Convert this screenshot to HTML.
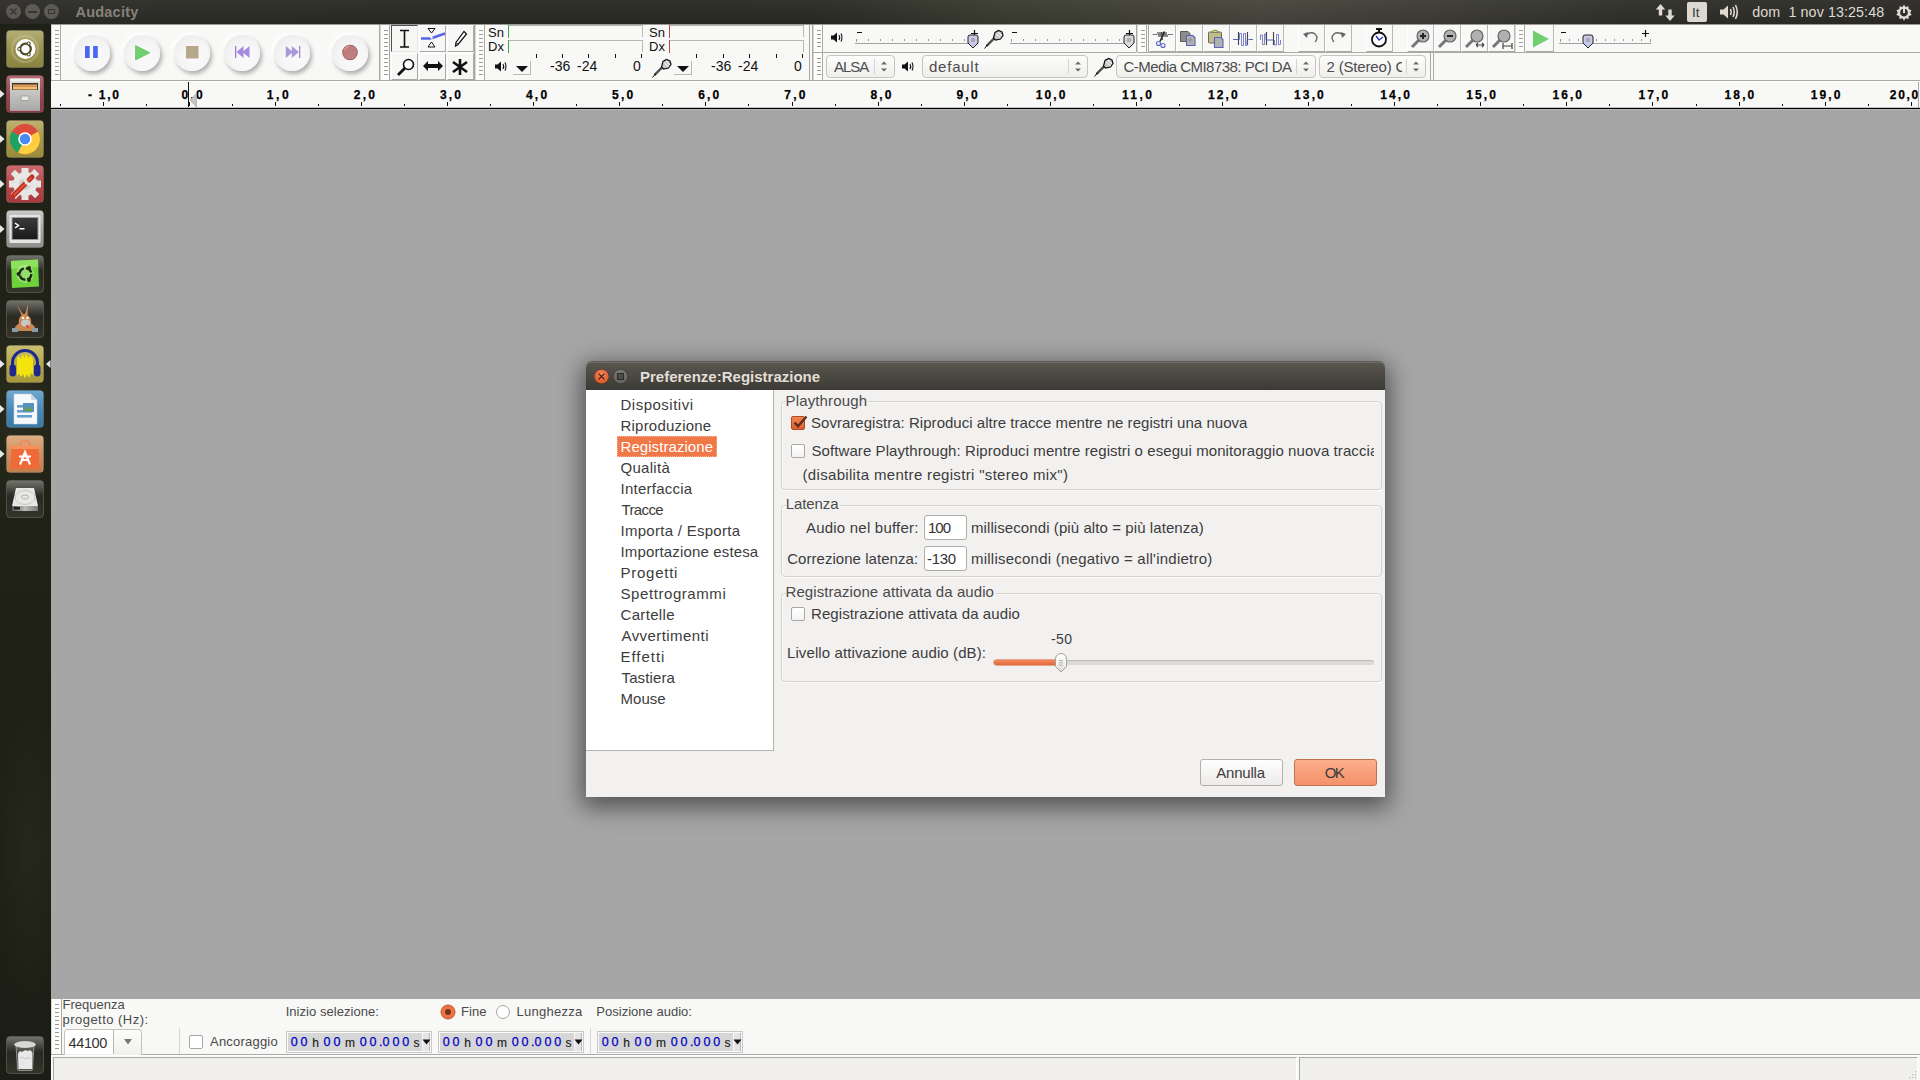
<!DOCTYPE html>
<html><head><meta charset="utf-8">
<style>
*{box-sizing:border-box;margin:0;padding:0}
html,body{width:1920px;height:1080px;overflow:hidden}
body{position:relative;background:#a6a6a6;font-family:"Liberation Sans",sans-serif;color:#3c3c3c}
.a{position:absolute}
.t{position:absolute;white-space:nowrap;line-height:1}
/* top panel */
#panel{left:0;top:0;width:1920px;height:24px;background:linear-gradient(rgba(255,255,255,.035),rgba(0,0,0,.07)),linear-gradient(to right,#2e2d29 0,#292a23 500px,#2a2b23 820px,#3a3b30 1000px,#414137 1150px,#46463d 1260px,#3c3c34 1440px,#2f2f29 1640px,#2c2b27 1920px)}
/* launcher */
#launcher{left:0;top:24px;width:51px;height:1056px;background:radial-gradient(ellipse 40px 120px at 20px 380px,rgba(70,75,50,.25),transparent),radial-gradient(ellipse 40px 160px at 30px 830px,rgba(70,75,50,.2),transparent),linear-gradient(#1f2017,#212318 40%,#1e2016 65%,#1c1d14)}
/* app */
#tb{left:51px;top:24px;width:1869px;height:57px;background:#f8f8f6}
#ruler{left:51px;top:81px;width:1869px;height:28px;background:#f8f8f6;border-top:1px solid #b8b8b6;border-bottom:1px solid #1a1a1a}
#selbar{left:51px;top:999px;width:1869px;height:56px;background:#f8f8f6;border-bottom:1px solid #b0b0ae}
#status{left:51px;top:1055px;width:1869px;height:25px;background:#f8f8f6}
/* dialog */
#dlg{left:586px;top:362px;width:799px;height:435px;background:#f2f1f0;border-radius:5px 5px 0 0;box-shadow:0 6px 24px 4px rgba(0,0,0,.52)}
#dtitle{left:0;top:0;width:799px;height:28px;background:linear-gradient(#5a574f,#3c3a35);border-radius:5px 5px 0 0;box-shadow:inset 0 1px 0 rgba(255,255,240,.13),0 -.5px 0 #3a3934}
#dlist{left:0;top:28px;width:188px;height:360px;background:#fff;border-right:1px solid #b5b3ae;border-bottom:1px solid #b5b3ae}
.li{position:absolute;left:35px;font-size:15px;color:#3c3c3c;white-space:nowrap;line-height:1}
.grp{position:absolute;border:1px solid #d6d4d0;border-radius:4px}
.glab{position:absolute;font-size:15px;color:#4a4a4a;background:#f2f1f0;padding:0 1px;line-height:1;white-space:nowrap}
.cb{position:absolute;width:14px;height:14px;border:1px solid #a8a7a3;border-radius:2px;background:linear-gradient(#fff,#f4f4f4)}
.lbl{position:absolute;font-size:15px;color:#3c3c3c;white-space:nowrap;line-height:1}
.fld{position:absolute;background:#fff;border:1px solid #aeada9;border-radius:3px;font-size:15px;color:#333;line-height:1}
</style></head><body>
<div id="panel" class="a">
  <div class="a" style="left:6px;top:4px;width:15px;height:15px;border-radius:50%;background:#5b5a55"></div>
  <svg class="a" style="left:9px;top:7px" width="9" height="9"><path d="M1.5 1.5L7.5 7.5M7.5 1.5L1.5 7.5" stroke="#36352f" stroke-width="1.4"/></svg>
  <div class="a" style="left:25px;top:4px;width:15px;height:15px;border-radius:50%;background:#5b5a55"></div>
  <div class="a" style="left:28px;top:11px;width:9px;height:2px;background:#36352f"></div>
  <div class="a" style="left:44px;top:4px;width:15px;height:15px;border-radius:50%;background:#5b5a55"></div>
  <div class="a" style="left:48px;top:9px;width:7px;height:5px;border:1.3px solid #36352f"></div>
  <div class="t" style="left:75.50px;top:5px;font-size:14.5px;font-weight:bold;color:#858279;letter-spacing:0.214px;">Audacity</div>
  <svg class="a" style="left:1655px;top:3px" width="22" height="19"><path d="M5.5 1L0.8 6.5H3.8V12.5H7.2V6.5H10.2Z M15 18L19.7 12.5H16.7V6.5H13.3V12.5H10.3Z" fill="#dfdbd2"/></svg>
  <div class="a" style="left:1687px;top:2px;width:20px;height:20px;border-radius:2px;background:#dcd8d2"></div>
  <div class="t" style="left:1692px;top:6px;font-size:13.5px;color:#3a3935">It</div>
  <svg class="a" style="left:1719px;top:3px" width="22" height="18"><path d="M1 6.5H4.5L9 2.5V15.5L4.5 11.5H1Z" fill="#dfdbd2"/><path d="M11.5 6Q13 9 11.5 12M14 4Q16.5 9 14 14M16.5 2Q20 9 16.5 16" fill="none" stroke="#dfdbd2" stroke-width="1.6"/></svg>
  <div class="t" style="left:1752.30px;top:5px;font-size:14.3px;color:#dfdbd2;letter-spacing:0.083px;">dom&nbsp; 1 nov 13:25:48</div>
  <svg class="a" style="left:1895px;top:3px" width="18" height="18"><path d="M9 1.5L10.5 4L13.4 3.2L13.8 6.2L16.6 7.2L15.2 9.6L16.6 12L13.8 13L13.4 16L10.5 15.2L9 17.7L7.5 15.2L4.6 16L4.2 13L1.4 12L2.8 9.6L1.4 7.2L4.2 6.2L4.6 3.2L7.5 4Z" fill="#dfdbd2"/><circle cx="9" cy="9.6" r="3.8" fill="#302f2b"/><path d="M9 4V10" stroke="#dfdbd2" stroke-width="2"/></svg>
</div>
<!--LAUNCH-->
<svg width="0" height="0" style="position:absolute"><defs>
<linearGradient id="gOl" x1="0" y1="0" x2="0" y2="1"><stop offset="0" stop-color="#a8a260"/><stop offset="1" stop-color="#8a8440"/></linearGradient>
<linearGradient id="gRd" x1="0" y1="0" x2="0" y2="1"><stop offset="0" stop-color="#a8565c"/><stop offset="1" stop-color="#8a3a42"/></linearGradient>
<linearGradient id="gYl" x1="0" y1="0" x2="0" y2="1"><stop offset="0" stop-color="#b5a65c"/><stop offset="1" stop-color="#9a8a3c"/></linearGradient>
<linearGradient id="gRd2" x1="0" y1="0" x2="0" y2="1"><stop offset="0" stop-color="#c4565a"/><stop offset="1" stop-color="#a83a3e"/></linearGradient>
<linearGradient id="gGy" x1="0" y1="0" x2="0" y2="1"><stop offset="0" stop-color="#c0c0be"/><stop offset="1" stop-color="#8e8e8c"/></linearGradient>
<linearGradient id="gDk" x1="0" y1="0" x2="0" y2="1"><stop offset="0" stop-color="#4a4a42"/><stop offset=".45" stop-color="#2a2a22"/><stop offset="1" stop-color="#34342a"/></linearGradient>
<linearGradient id="gGl" x1="0" y1="0" x2="0" y2="1"><stop offset="0" stop-color="rgba(255,255,255,.22)"/><stop offset="1" stop-color="rgba(255,255,255,0)"/></linearGradient>
<linearGradient id="gGl2" x1="0" y1="0" x2="0" y2="1"><stop offset="0" stop-color="rgba(255,255,255,.12)"/><stop offset="1" stop-color="rgba(255,255,255,0)"/></linearGradient>
<linearGradient id="gAu" x1="0" y1="0" x2="0" y2="1"><stop offset="0" stop-color="#c2b65c"/><stop offset="1" stop-color="#a8983c"/></linearGradient>
<linearGradient id="gBl" x1="0" y1="0" x2="0" y2="1"><stop offset="0" stop-color="#5c9cca"/><stop offset="1" stop-color="#3a78a6"/></linearGradient>
<linearGradient id="gOr" x1="0" y1="0" x2="0" y2="1"><stop offset="0" stop-color="#daa272"/><stop offset="1" stop-color="#c07e4e"/></linearGradient>
<linearGradient id="gDr" x1="0" y1="0" x2="0" y2="1"><stop offset="0" stop-color="#c8c8c6"/><stop offset="1" stop-color="#a8a8a6"/></linearGradient>
<linearGradient id="gTm" x1="0" y1="0" x2="0" y2="1"><stop offset="0" stop-color="#3a3a3a"/><stop offset="1" stop-color="#1a1a1a"/></linearGradient>
<linearGradient id="gHd" x1="0" y1="0" x2="1" y2="0"><stop offset="0" stop-color="#555"/><stop offset=".5" stop-color="#bbb"/><stop offset="1" stop-color="#777"/></linearGradient>
<radialGradient id="gCl" cx=".5" cy=".35" r=".7"><stop offset="0" stop-color="#f58a5c"/><stop offset="1" stop-color="#d9501f"/></radialGradient><radialGradient id="gMx" cx=".5" cy=".35" r=".7"><stop offset="0" stop-color="#85837d"/><stop offset="1" stop-color="#5e5c57"/></radialGradient>
</defs></svg>
<div id="launcher" class="a">
<svg class="a" style="left:6px;top:6px" width="38" height="38" viewBox="0 0 38 38"><rect x="0.5" y="0.5" width="37" height="37" rx="3.5" fill="url(#gOl)" stroke="rgba(255,255,255,0.12)"/><rect x="1" y="1" width="36" height="18" rx="3" fill="url(#gGl2)"/><circle cx="19" cy="19" r="13" fill="none" stroke="rgba(255,255,255,.18)" stroke-width="2.5"/><circle cx="19.5" cy="19" r="10" fill="#fff"/><circle cx="19.5" cy="19" r="5.3" fill="none" stroke="#4f4a22" stroke-width="2.2"/><circle cx="13.2" cy="19" r="2" fill="#4f4a22"/><circle cx="22.7" cy="13.5" r="2" fill="#4f4a22"/><circle cx="22.7" cy="24.5" r="2" fill="#4f4a22"/><circle cx="13.2" cy="19" r="1" fill="#fff"/><circle cx="22.7" cy="13.5" r="1" fill="#fff"/><circle cx="22.7" cy="24.5" r="1" fill="#fff"/></svg>
<svg class="a" style="left:6px;top:51px" width="38" height="38" viewBox="0 0 38 38"><rect x="0.5" y="0.5" width="37" height="37" rx="3.5" fill="url(#gRd)" stroke="rgba(255,255,255,0.12)"/><rect x="1" y="1" width="36" height="18" rx="3" fill="url(#gGl2)"/><rect x="4" y="3.5" width="30" height="32" rx="1.5" fill="#d8d8d6"/><rect x="4" y="3.5" width="30" height="3" fill="#efefed"/><rect x="6" y="8" width="26" height="7" fill="#3a3a38"/><rect x="7" y="9.5" width="24" height="2" fill="#f09a50"/><rect x="7" y="11.5" width="24" height="3" fill="#f4c070"/><rect x="4" y="15" width="30" height="20.5" fill="url(#gDr)"/><rect x="15" y="21" width="8" height="4.5" rx="1" fill="#e8e8e6" stroke="#8a8a88" stroke-width=".7"/></svg>
<svg class="a" style="left:6px;top:96px" width="38" height="38" viewBox="0 0 38 38"><rect x="0.5" y="0.5" width="37" height="37" rx="3.5" fill="url(#gYl)" stroke="rgba(255,255,255,0.12)"/><rect x="1" y="1" width="36" height="18" rx="3" fill="url(#gGl2)"/><circle cx="19" cy="19" r="15" fill="#dd4b3e"/><path d="M19 19L6 11.5A15 15 0 0 0 12 32.5Z" fill="#1da462"/><path d="M19 19L12 32.5A15 15 0 0 0 34 19Z" fill="#ffcd40"/><path d="M19 19L34 19A15 15 0 0 0 32 11.5Z" fill="#ffcd40"/><circle cx="19" cy="19" r="6.8" fill="#fff"/><circle cx="19" cy="19" r="5.2" fill="#4a89f3"/></svg>
<svg class="a" style="left:6px;top:141px" width="38" height="38" viewBox="0 0 38 38"><rect x="0.5" y="0.5" width="37" height="37" rx="3.5" fill="url(#gRd2)" stroke="rgba(255,255,255,0.12)"/><rect x="1" y="1" width="36" height="18" rx="3" fill="url(#gGl2)"/><g fill="#e6e6e4"><circle cx="19" cy="19" r="12"/><rect x="15.5" y="3" width="7" height="6"/><rect x="15.5" y="29" width="7" height="6"/><rect x="3" y="15.5" width="6" height="7"/><rect x="29" y="15.5" width="6" height="7"/><rect x="6" y="6" width="7" height="6" transform="rotate(45 9 9)"/><rect x="25" y="6" width="7" height="6" transform="rotate(45 29 9)"/><rect x="6" y="26" width="7" height="6" transform="rotate(45 9 29)"/><rect x="25" y="26" width="7" height="6" transform="rotate(45 29 29)"/></g><circle cx="19" cy="19" r="6" fill="#cfcfcd"/><path d="M7.5 30.5L26 12" stroke="#c03020" stroke-width="5" stroke-linecap="round"/><path d="M8 30L25.5 12.5" stroke="#e05a48" stroke-width="1.5"/><path d="M23.5 8.5A5.5 5.5 0 1 0 30 14.5" fill="none" stroke="#e6e6e4" stroke-width="3.2"/></svg>
<svg class="a" style="left:6px;top:186px" width="38" height="38" viewBox="0 0 38 38"><rect x="0.5" y="0.5" width="37" height="37" rx="3.5" fill="url(#gGy)" stroke="rgba(255,255,255,0.12)"/><rect x="1" y="1" width="36" height="18" rx="3" fill="url(#gGl2)"/><rect x="3.5" y="5" width="31" height="28" rx="1" fill="#e4e4e2"/><rect x="5.5" y="7" width="27" height="23" fill="#9a9a98"/><rect x="6.5" y="8" width="25" height="21" fill="url(#gTm)"/><path d="M9 13L12.5 15.5L9 18" stroke="#fff" stroke-width="1.5" fill="none"/><rect x="13.5" y="18" width="5" height="1.5" fill="#fff"/></svg>
<svg class="a" style="left:6px;top:231px" width="38" height="38" viewBox="0 0 38 38"><rect x="0.5" y="0.5" width="37" height="37" rx="3.5" fill="url(#gDk)" stroke="rgba(255,255,255,0.18)"/><rect x="1" y="1" width="36" height="14" rx="3" fill="url(#gGl)"/><path d="M5 6L32 4.5L33 31.5L6 33Z" fill="#6ed23c"/><path d="M5 6L32 4.5L32.3 12L5.4 14Z" fill="#8ee060"/><circle cx="19" cy="19" r="9" fill="rgba(255,255,255,.25)"/><circle cx="19.5" cy="19" r="5.8" fill="none" stroke="#1e2a10" stroke-width="2.4" stroke-dasharray="7 2"/><circle cx="12.5" cy="19" r="2" fill="#1e2a10"/><circle cx="23" cy="13" r="2" fill="#1e2a10"/><circle cx="23" cy="25" r="2" fill="#1e2a10"/></svg>
<svg class="a" style="left:6px;top:276px" width="38" height="38" viewBox="0 0 38 38"><rect x="0.5" y="0.5" width="37" height="37" rx="3.5" fill="url(#gDk)" stroke="rgba(255,255,255,0.18)"/><rect x="1" y="1" width="36" height="14" rx="3" fill="url(#gGl)"/><path d="M11 5L17 14L19 14L22 4L21.5 15Q26 18 25 23L29 27L28 31H10L9 27L13 23Q12 18 15.5 15Z" fill="#c88850"/><ellipse cx="19.5" cy="23" rx="4.5" ry="3.5" fill="#c8c8c8"/><circle cx="17" cy="18" r="1.3" fill="#fff"/><circle cx="21.5" cy="18" r="1.3" fill="#fff"/><rect x="6" y="28" width="6" height="4" fill="#8a98a8"/><rect x="26" y="28" width="6" height="4" fill="#8a98a8"/><path d="M21 25L22 28" stroke="#e03a50" stroke-width="2"/></svg>
<svg class="a" style="left:6px;top:321px" width="38" height="38" viewBox="0 0 38 38"><rect x="0.5" y="0.5" width="37" height="37" rx="3.5" fill="url(#gAu)" stroke="rgba(255,255,255,0.12)"/><rect x="1" y="1" width="36" height="18" rx="3" fill="url(#gGl2)"/><path d="M6.5 24V18A12.5 12.5 0 0 1 31.5 18V24" fill="none" stroke="#1c2890" stroke-width="3"/><rect x="3.5" y="19.5" width="6.5" height="12" rx="3.2" fill="#1c2890"/><rect x="28" y="19.5" width="6.5" height="12" rx="3.2" fill="#1c2890"/><path d="M11 13L13 11L14.5 14L16.5 9L18.5 13L20.5 8.5L22.5 13L24.5 10L27 14V30L25 28L23 33L21 29L19 33.5L17 29L15 32L13 28.5L11 31Z" fill="#f2e40c"/></svg>
<svg class="a" style="left:6px;top:366px" width="38" height="38" viewBox="0 0 38 38"><rect x="0.5" y="0.5" width="37" height="37" rx="3.5" fill="url(#gBl)" stroke="rgba(255,255,255,0.12)"/><rect x="1" y="1" width="36" height="18" rx="3" fill="url(#gGl2)"/><path d="M8 4H25L31 10V34H8Z" fill="#f6f8fa" stroke="#c8d4e0" stroke-width=".6"/><path d="M25 4V10H31Z" fill="#c8d8e8"/><rect x="11" y="15" width="15" height="2.6" fill="#6aa0d0"/><rect x="11" y="20" width="15" height="2.6" fill="#6aa0d0"/><rect x="11" y="25" width="15" height="2.6" fill="#6aa0d0"/><rect x="17" y="13" width="11" height="9" fill="#5890c0"/><path d="M18 21L22 16L27 21Z" fill="#6a9e4a"/></svg>
<svg class="a" style="left:6px;top:411px" width="38" height="38" viewBox="0 0 38 38"><rect x="0.5" y="0.5" width="37" height="37" rx="3.5" fill="url(#gOr)" stroke="rgba(255,255,255,0.12)"/><rect x="1" y="1" width="36" height="18" rx="3" fill="url(#gGl2)"/><path d="M14 12Q14 5.5 19 5.5Q24 5.5 24 12" fill="none" stroke="#f08a58" stroke-width="2"/><path d="M5.5 11H32.5L33.5 34H4.5Z" fill="#f06a38"/><path d="M5.5 11H32.5L32.6 14H5.4Z" fill="#f8905c"/><path d="M14 29.5L19 17L24 29.5M15.5 25H22.5M13 21.5H25" stroke="#fff" stroke-width="2.1" fill="none"/></svg>
<svg class="a" style="left:6px;top:456px" width="38" height="38" viewBox="0 0 38 38"><rect x="0.5" y="0.5" width="37" height="37" rx="3.5" fill="url(#gDk)" stroke="rgba(255,255,255,0.18)"/><rect x="1" y="1" width="36" height="14" rx="3" fill="url(#gGl)"/><path d="M10 8H28L32 26H6Z" fill="#e8e8e6"/><ellipse cx="19" cy="17.5" rx="10" ry="7" fill="none" stroke="#c4c4c2" stroke-width="1"/><ellipse cx="19" cy="17" rx="3.5" ry="2" fill="none" stroke="#b0b0ae" stroke-width="1"/><rect x="6" y="26" width="26" height="5" fill="url(#gHd)"/><rect x="8" y="27" width="6" height="2.5" fill="#222"/></svg>
<svg class="a" style="left:6px;top:1012px" width="38" height="38" viewBox="0 0 38 38"><rect x="0.5" y="0.5" width="37" height="37" rx="3.5" fill="url(#gDk)" stroke="rgba(255,255,255,0.18)"/><rect x="1" y="1" width="36" height="14" rx="3" fill="url(#gGl)"/><path d="M10 9H28L26.5 33Q26.5 34.5 25 34.5H13Q11.5 34.5 11.5 33Z" fill="rgba(200,200,200,.22)" stroke="rgba(230,230,230,.6)" stroke-width=".8"/><ellipse cx="19" cy="8.5" rx="10.5" ry="3" fill="#d8d8d6" stroke="#f0f0f0" stroke-width=".6"/><path d="M12 18Q13 14 16 16Q19 13 22 15Q25 13 26.5 17L26 33H12.5Z" fill="#e8e8e8"/><path d="M14 22Q17 20 19 23Q22 20 25 23" stroke="#bcbcbc" stroke-width=".8" fill="none"/></svg>
<svg class="a" style="left:0;top:66px" width="5" height="8"><path d="M0 0L4.5 4L0 8Z" fill="#e8e8e8"/></svg>
<svg class="a" style="left:0;top:111px" width="5" height="8"><path d="M0 0L4.5 4L0 8Z" fill="#e8e8e8"/></svg>
<svg class="a" style="left:0;top:156px" width="5" height="8"><path d="M0 0L4.5 4L0 8Z" fill="#e8e8e8"/></svg>
<svg class="a" style="left:0;top:201px" width="5" height="8"><path d="M0 0L4.5 4L0 8Z" fill="#e8e8e8"/></svg>
<svg class="a" style="left:0;top:336px" width="5" height="8"><path d="M0 0L4.5 4L0 8Z" fill="#e8e8e8"/></svg>
<svg class="a" style="left:0;top:381px" width="5" height="8"><path d="M0 0L4.5 4L0 8Z" fill="#e8e8e8"/></svg>
<svg class="a" style="left:0;top:426px" width="5" height="8"><path d="M0 0L4.5 4L0 8Z" fill="#e8e8e8"/></svg>
<svg class="a" style="left:46px;top:336px" width="5" height="8"><path d="M4.5 0L0 4L4.5 8Z" fill="#e8e8e8"/></svg>
</div>
<!--/LAUNCH-->
<div id="tb" class="a"></div>
<div id="ruler" class="a"></div>
<!--TB-->
<div class="a" style="left:51px;top:24px;width:1869px;height:1px;background:#9a9a98"></div>
<div class="a" style="left:51px;top:80px;width:1869px;height:1px;background:#a9a9a7"></div>
<div class="a" style="left:51px;top:81px;width:1869px;height:1px;background:#ffffff"></div>
<div class="a" style="left:51px;top:25px;width:10px;height:55px;background:#fdfdfc;border-right:1px solid #a9a9a7;border-left:1px solid #d8d8d6"></div>
<svg class="a" style="left:55px;top:25px" width="4" height="55"><g fill="#9a9a98"><rect x="0" y="5" width="4" height="1"/><rect x="0" y="9" width="4" height="1"/><rect x="0" y="13" width="4" height="1"/><rect x="0" y="17" width="4" height="1"/><rect x="0" y="21" width="4" height="1"/><rect x="0" y="25" width="4" height="1"/><rect x="0" y="29" width="4" height="1"/><rect x="0" y="33" width="4" height="1"/><rect x="0" y="37" width="4" height="1"/><rect x="0" y="41" width="4" height="1"/><rect x="0" y="45" width="4" height="1"/><rect x="0" y="49" width="4" height="1"/></g></svg>
<div class="a" style="left:379px;top:25px;width:1px;height:55px;background:#a9a9a7"></div>
<div class="a" style="left:74px;top:34.5px;width:36px;height:36px;border-radius:50%;background:radial-gradient(circle at 60% 64%,#fafafa 0,#f6f6f6 42%,#ededed 78%,#eeeeee 100%);box-shadow:2px 3px 4px rgba(0,0,0,.3),-2px -2px 5px #fff"></div>
<div class="a" style="left:124px;top:34.5px;width:36px;height:36px;border-radius:50%;background:radial-gradient(circle at 60% 64%,#fafafa 0,#f6f6f6 42%,#ededed 78%,#eeeeee 100%);box-shadow:2px 3px 4px rgba(0,0,0,.3),-2px -2px 5px #fff"></div>
<div class="a" style="left:174px;top:34.5px;width:36px;height:36px;border-radius:50%;background:radial-gradient(circle at 60% 64%,#fafafa 0,#f6f6f6 42%,#ededed 78%,#eeeeee 100%);box-shadow:2px 3px 4px rgba(0,0,0,.3),-2px -2px 5px #fff"></div>
<div class="a" style="left:224px;top:34.5px;width:36px;height:36px;border-radius:50%;background:radial-gradient(circle at 60% 64%,#fafafa 0,#f6f6f6 42%,#ededed 78%,#eeeeee 100%);box-shadow:2px 3px 4px rgba(0,0,0,.3),-2px -2px 5px #fff"></div>
<div class="a" style="left:274px;top:34.5px;width:36px;height:36px;border-radius:50%;background:radial-gradient(circle at 60% 64%,#fafafa 0,#f6f6f6 42%,#ededed 78%,#eeeeee 100%);box-shadow:2px 3px 4px rgba(0,0,0,.3),-2px -2px 5px #fff"></div>
<div class="a" style="left:332px;top:34.5px;width:36px;height:36px;border-radius:50%;background:radial-gradient(circle at 60% 64%,#fafafa 0,#f6f6f6 42%,#ededed 78%,#eeeeee 100%);box-shadow:2px 3px 4px rgba(0,0,0,.3),-2px -2px 5px #fff"></div>
<svg class="a" style="left:84px;top:45px" width="16" height="15"><rect x="1" y="1" width="4.7" height="12" rx=".6" fill="#4a68ee"/><rect x="9.1" y="1" width="4.7" height="12" rx=".6" fill="#4a68ee"/></svg>
<svg class="a" style="left:134px;top:44px" width="18" height="18"><path d="M1.5 1.5L16 8.8L1.5 16Z" fill="#70d070" stroke="#5cb85c" stroke-width=".6"/></svg>
<svg class="a" style="left:185px;top:45px" width="15" height="15"><rect x="1" y="1" width="12.5" height="12.5" fill="#b8a88a"/></svg>
<svg class="a" style="left:234px;top:45px" width="18" height="15"><rect x="1" y="1" width="1.3" height="12" fill="#9c7cd8"/><path d="M2.5 7L9.5 1V13Z M8.5 7L15.5 1V13Z" fill="#a58ae0"/></svg>
<svg class="a" style="left:284px;top:45px" width="18" height="15"><rect x="15" y="1" width="1.3" height="12" fill="#9c8cd0"/><path d="M14.8 7L7.8 1V13Z M8.8 7L1.8 1V13Z" fill="#a898d8"/></svg>
<svg class="a" style="left:341px;top:44px" width="18" height="18"><circle cx="9" cy="8.5" r="7.8" fill="#9a5c5c"/><circle cx="9" cy="8.5" r="7" fill="#bf7e7e"/><path d="M3.5 6A6 6 0 0 1 8 2" stroke="#e09a9a" stroke-width="1.2" fill="none"/></svg>
<div class="a" style="left:380px;top:25px;width:10px;height:55px;background:#fdfdfc;border-right:1px solid #a9a9a7;border-left:1px solid #d8d8d6"></div>
<svg class="a" style="left:384px;top:25px" width="4" height="55"><g fill="#9a9a98"><rect x="0" y="5" width="4" height="1"/><rect x="0" y="9" width="4" height="1"/><rect x="0" y="13" width="4" height="1"/><rect x="0" y="17" width="4" height="1"/><rect x="0" y="21" width="4" height="1"/><rect x="0" y="25" width="4" height="1"/><rect x="0" y="29" width="4" height="1"/><rect x="0" y="33" width="4" height="1"/><rect x="0" y="37" width="4" height="1"/><rect x="0" y="41" width="4" height="1"/><rect x="0" y="45" width="4" height="1"/><rect x="0" y="49" width="4" height="1"/></g></svg>
<div class="a" style="left:474px;top:25px;width:1px;height:55px;background:#a9a9a7"></div>
<div class="a" style="left:391px;top:25px;width:27px;height:27px;background:#f6f6f4;border-left:1px solid #505050;border-top:1px solid #505050;border-right:1px solid #e8e8e6;border-bottom:1px solid #e8e8e6"></div>
<div class="a" style="left:419px;top:25px;width:27px;height:27px;background:#f6f6f4;border-right:1px solid #a9a9a7;border-bottom:1px solid #a9a9a7;border-left:1px solid #fff;border-top:1px solid #fff"></div>
<div class="a" style="left:447px;top:25px;width:27px;height:27px;background:#f6f6f4;border-right:1px solid #a9a9a7;border-bottom:1px solid #a9a9a7;border-left:1px solid #fff;border-top:1px solid #fff"></div>
<div class="a" style="left:391px;top:53px;width:27px;height:27px;background:#f6f6f4;border-right:1px solid #a9a9a7;border-bottom:1px solid #a9a9a7;border-left:1px solid #fff;border-top:1px solid #fff"></div>
<div class="a" style="left:419px;top:53px;width:27px;height:27px;background:#f6f6f4;border-right:1px solid #a9a9a7;border-bottom:1px solid #a9a9a7;border-left:1px solid #fff;border-top:1px solid #fff"></div>
<div class="a" style="left:447px;top:53px;width:27px;height:27px;background:#f6f6f4;border-right:1px solid #a9a9a7;border-bottom:1px solid #a9a9a7;border-left:1px solid #fff;border-top:1px solid #fff"></div>
<svg class="a" style="left:398px;top:29px" width="14" height="20"><path d="M2 1.5H11M2 18H11M6.5 1.5V18" stroke="#111" stroke-width="1.6"/></svg>
<svg class="a" style="left:420px;top:27px" width="26" height="22"><path d="M8 1.5H15L11.5 6Z M8 20H15L11.5 15Z" fill="#fff" stroke="#111" stroke-width="1"/><path d="M1 11.5H10L15 10L25 6.5" stroke="#5a64e8" stroke-width="2.4" fill="none"/><circle cx="11.5" cy="10.5" r="1.2" fill="#fff"/></svg>
<svg class="a" style="left:454px;top:30px" width="14" height="18"><path d="M10 1.5L12.5 4L4 14.5L1.5 16L2 12.5Z" fill="#fff" stroke="#111" stroke-width="1.2"/><path d="M2 12.5L4 14.5" stroke="#111"/></svg>
<svg class="a" style="left:396px;top:57px" width="20" height="20"><circle cx="12.5" cy="7.5" r="5" fill="#fff" stroke="#111" stroke-width="1.6"/><path d="M9 11L2 18" stroke="#111" stroke-width="2.8"/></svg>
<svg class="a" style="left:422px;top:59px" width="22" height="14"><path d="M1 7L6 2V5H16V2L21 7L16 12V9H6V12Z" fill="#111"/></svg>
<svg class="a" style="left:451px;top:58px" width="18" height="18"><path d="M9 1V17M2 4L16 14M16 4L2 14" stroke="#111" stroke-width="2.6"/></svg>
<div class="a" style="left:475px;top:25px;width:10px;height:55px;background:#fdfdfc;border-right:1px solid #a9a9a7;border-left:1px solid #d8d8d6"></div>
<svg class="a" style="left:479px;top:25px" width="4" height="55"><g fill="#9a9a98"><rect x="0" y="5" width="4" height="1"/><rect x="0" y="9" width="4" height="1"/><rect x="0" y="13" width="4" height="1"/><rect x="0" y="17" width="4" height="1"/><rect x="0" y="21" width="4" height="1"/><rect x="0" y="25" width="4" height="1"/><rect x="0" y="29" width="4" height="1"/><rect x="0" y="33" width="4" height="1"/><rect x="0" y="37" width="4" height="1"/><rect x="0" y="41" width="4" height="1"/><rect x="0" y="45" width="4" height="1"/><rect x="0" y="49" width="4" height="1"/></g></svg>
<div class="a" style="left:809px;top:25px;width:1px;height:55px;background:#a9a9a7"></div>
<div class="a" style="left:812px;top:25px;width:1px;height:55px;background:#a9a9a7"></div>
<div class="t" style="left:488px;top:26px;font-size:13px;color:#111">Sn</div>
<div class="t" style="left:488px;top:40px;font-size:13px;color:#111">Dx</div>
<div class="a" style="left:508px;top:25px;width:135px;height:12px;background:#f8f8f6;border-top:1px solid #b8b8b6;border-right:1px solid #b8b8b6"></div>
<div class="a" style="left:508px;top:25px;width:1px;height:13px;background:#3aa845"></div>
<div class="a" style="left:508px;top:40px;width:135px;height:12px;background:#f8f8f6;border-top:1px solid #b8b8b6;border-right:1px solid #b8b8b6"></div>
<div class="a" style="left:508px;top:40px;width:1px;height:13px;background:#3aa845"></div>
<div class="a" style="left:536px;top:54px;width:1px;height:4px;background:#111"></div>
<div class="a" style="left:562px;top:54px;width:1px;height:4px;background:#111"></div>
<div class="a" style="left:588px;top:54px;width:1px;height:4px;background:#111"></div>
<div class="a" style="left:615px;top:54px;width:1px;height:4px;background:#111"></div>
<div class="a" style="left:641px;top:54px;width:1px;height:4px;background:#111"></div>
<div class="t" style="left:649px;top:26px;font-size:13px;color:#111">Sn</div>
<div class="t" style="left:649px;top:40px;font-size:13px;color:#111">Dx</div>
<div class="a" style="left:669px;top:25px;width:135px;height:12px;background:#f8f8f6;border-top:1px solid #b8b8b6;border-right:1px solid #b8b8b6"></div>
<div class="a" style="left:669px;top:25px;width:1px;height:13px;background:#c04848"></div>
<div class="a" style="left:669px;top:40px;width:135px;height:12px;background:#f8f8f6;border-top:1px solid #b8b8b6;border-right:1px solid #b8b8b6"></div>
<div class="a" style="left:669px;top:40px;width:1px;height:13px;background:#c04848"></div>
<div class="a" style="left:696px;top:54px;width:1px;height:4px;background:#111"></div>
<div class="a" style="left:723px;top:54px;width:1px;height:4px;background:#111"></div>
<div class="a" style="left:749px;top:54px;width:1px;height:4px;background:#111"></div>
<div class="a" style="left:776px;top:54px;width:1px;height:4px;background:#111"></div>
<div class="a" style="left:802px;top:54px;width:1px;height:4px;background:#111"></div>
<svg class="a" style="left:494px;top:60px" width="14" height="13"><path d="M1 4.5H3.5L7 1.5V11.5L3.5 8.5H1Z" fill="#111"/><path d="M9 4Q10.5 6.5 9 9M11 2.5Q13 6.5 11 10.5" stroke="#111" stroke-width="1.1" fill="none"/></svg>
<div class="a" style="left:513px;top:61px;width:18px;height:14px;border-right:1px solid #b8b8b6;border-bottom:1px solid #b8b8b6"></div>
<svg class="a" style="left:515px;top:65px" width="14" height="8"><path d="M1 1H13L7 7Z" fill="#111"/></svg>
<div class="t" style="left:550px;top:59px;font-size:14px;color:#111">-36</div>
<div class="t" style="left:577px;top:59px;font-size:14px;color:#111">-24</div>
<div class="t" style="left:633px;top:59px;font-size:14px;color:#111">0</div>
<svg class="a" style="left:651px;top:58px" width="22" height="20"><path d="M1.5 19.5L4 16.5" stroke="#111" stroke-width="1"/><path d="M3.5 17L11 9.5" stroke="#111" stroke-width="2.2"/><path d="M4.5 16L10.5 10" stroke="#ddd" stroke-width=".6"/><path d="M10.5 9L12 3.5L15.5 1.5L19 3L20 6.5L17.5 10L12.5 11Z" fill="#c8c8c8" stroke="#111" stroke-width="1.2"/><path d="M13 4.5L17.5 9M15 3L19 7" stroke="#fff" stroke-width="1"/></svg>
<div class="a" style="left:674px;top:61px;width:18px;height:14px;border-right:1px solid #b8b8b6;border-bottom:1px solid #b8b8b6"></div>
<svg class="a" style="left:676px;top:65px" width="14" height="8"><path d="M1 1H13L7 7Z" fill="#111"/></svg>
<div class="t" style="left:711px;top:59px;font-size:14px;color:#111">-36</div>
<div class="t" style="left:738px;top:59px;font-size:14px;color:#111">-24</div>
<div class="t" style="left:794px;top:59px;font-size:14px;color:#111">0</div>
<div class="a" style="left:813px;top:25px;width:10px;height:27px;background:#fdfdfc;border-right:1px solid #a9a9a7;border-left:1px solid #d8d8d6"></div>
<svg class="a" style="left:817px;top:25px" width="4" height="27"><g fill="#9a9a98"><rect x="0" y="5" width="4" height="1"/><rect x="0" y="9" width="4" height="1"/><rect x="0" y="13" width="4" height="1"/><rect x="0" y="17" width="4" height="1"/><rect x="0" y="21" width="4" height="1"/></g></svg>
<div class="a" style="left:813px;top:52px;width:323px;height:1px;background:#a9a9a7"></div>
<div class="a" style="left:1136px;top:25px;width:1px;height:27px;background:#a9a9a7"></div>
<svg class="a" style="left:830px;top:31px" width="14" height="13"><path d="M1 4.5H3.5L7 1.5V11.5L3.5 8.5H1Z" fill="#111"/><path d="M9 4Q10.5 6.5 9 9M11 2.5Q13 6.5 11 10.5" stroke="#111" stroke-width="1.1" fill="none"/></svg>
<div class="a" style="left:855px;top:43px;width:120px;height:1px;background:#a0a0a0"></div>
<div class="a" style="left:857px;top:32px;width:5px;height:1px;background:#111"></div>
<svg class="a" style="left:970px;top:29px" width="9" height="9"><path d="M4.5 1V8M1 4.5H8" stroke="#111" stroke-width="1.2"/></svg>
<svg class="a" style="left:856px;top:39px" width="125" height="4"><g fill="#999"><rect x="0" y="0" width="1" height="3"/><rect x="12" y="0" width="1" height="2"/><rect x="24" y="0" width="1" height="2"/><rect x="36" y="0" width="1" height="2"/><rect x="48" y="0" width="1" height="2"/><rect x="60" y="0" width="1" height="2"/><rect x="72" y="0" width="1" height="2"/><rect x="84" y="0" width="1" height="2"/><rect x="96" y="0" width="1" height="2"/><rect x="108" y="0" width="1" height="2"/><rect x="120" y="0" width="1" height="2"/></g></svg>
<svg class="a" style="left:967px;top:34px" width="12" height="15"><path d="M1 3Q1 1 3 1H9Q11 1 11 3V9L6 14L1 9Z" fill="#c8c8e8" stroke="#222" stroke-width="1"/><path d="M4 5H8M4 7H8" stroke="#777" stroke-width=".8"/></svg>
<div class="a" style="left:1010px;top:43px;width:120px;height:1px;background:#a0a0a0"></div>
<div class="a" style="left:1012px;top:32px;width:5px;height:1px;background:#111"></div>
<svg class="a" style="left:1125px;top:29px" width="9" height="9"><path d="M4.5 1V8M1 4.5H8" stroke="#111" stroke-width="1.2"/></svg>
<svg class="a" style="left:1011px;top:39px" width="125" height="4"><g fill="#999"><rect x="0" y="0" width="1" height="3"/><rect x="12" y="0" width="1" height="2"/><rect x="24" y="0" width="1" height="2"/><rect x="36" y="0" width="1" height="2"/><rect x="48" y="0" width="1" height="2"/><rect x="60" y="0" width="1" height="2"/><rect x="72" y="0" width="1" height="2"/><rect x="84" y="0" width="1" height="2"/><rect x="96" y="0" width="1" height="2"/><rect x="108" y="0" width="1" height="2"/><rect x="120" y="0" width="1" height="2"/></g></svg>
<svg class="a" style="left:1123px;top:34px" width="12" height="15"><path d="M1 3Q1 1 3 1H9Q11 1 11 3V9L6 14L1 9Z" fill="#d8d8d8" stroke="#222" stroke-width="1"/><path d="M4 5H8M4 7H8" stroke="#777" stroke-width=".8"/></svg>
<svg class="a" style="left:983px;top:29px" width="22" height="20"><path d="M1.5 19.5L4 16.5" stroke="#111" stroke-width="1"/><path d="M3.5 17L11 9.5" stroke="#111" stroke-width="2.2"/><path d="M4.5 16L10.5 10" stroke="#ddd" stroke-width=".6"/><path d="M10.5 9L12 3.5L15.5 1.5L19 3L20 6.5L17.5 10L12.5 11Z" fill="#c8c8c8" stroke="#111" stroke-width="1.2"/><path d="M13 4.5L17.5 9M15 3L19 7" stroke="#fff" stroke-width="1"/></svg>
<div class="a" style="left:1137px;top:25px;width:10px;height:27px;background:#fdfdfc;border-right:1px solid #a9a9a7;border-left:1px solid #d8d8d6"></div>
<svg class="a" style="left:1141px;top:25px" width="4" height="27"><g fill="#9a9a98"><rect x="0" y="5" width="4" height="1"/><rect x="0" y="9" width="4" height="1"/><rect x="0" y="13" width="4" height="1"/><rect x="0" y="17" width="4" height="1"/><rect x="0" y="21" width="4" height="1"/></g></svg>
<div class="a" style="left:1148px;top:25px;width:1px;height:27px;background:#a9a9a7"></div>
<div class="a" style="left:1149px;top:25px;width:27px;height:27px;border-right:1px solid #b8b8b6;border-bottom:1px solid #a9a9a7;border-left:1px solid #fff"></div>
<div class="a" style="left:1176px;top:25px;width:27px;height:27px;border-right:1px solid #b8b8b6;border-bottom:1px solid #a9a9a7;border-left:1px solid #fff"></div>
<div class="a" style="left:1203px;top:25px;width:27px;height:27px;border-right:1px solid #b8b8b6;border-bottom:1px solid #a9a9a7;border-left:1px solid #fff"></div>
<div class="a" style="left:1230px;top:25px;width:27px;height:27px;border-right:1px solid #b8b8b6;border-bottom:1px solid #a9a9a7;border-left:1px solid #fff"></div>
<div class="a" style="left:1257px;top:25px;width:27px;height:27px;border-right:1px solid #b8b8b6;border-bottom:1px solid #a9a9a7;border-left:1px solid #fff"></div>
<div class="a" style="left:1298px;top:25px;width:27px;height:27px;border-right:1px solid #b8b8b6;border-bottom:1px solid #a9a9a7;border-left:1px solid #fff"></div>
<div class="a" style="left:1325px;top:25px;width:27px;height:27px;border-right:1px solid #b8b8b6;border-bottom:1px solid #a9a9a7;border-left:1px solid #fff"></div>
<div class="a" style="left:1366px;top:25px;width:27px;height:27px;border-right:1px solid #b8b8b6;border-bottom:1px solid #a9a9a7;border-left:1px solid #fff"></div>
<div class="a" style="left:1407px;top:25px;width:27px;height:27px;border-right:1px solid #b8b8b6;border-bottom:1px solid #a9a9a7;border-left:1px solid #fff"></div>
<div class="a" style="left:1434px;top:25px;width:27px;height:27px;border-right:1px solid #b8b8b6;border-bottom:1px solid #a9a9a7;border-left:1px solid #fff"></div>
<div class="a" style="left:1461px;top:25px;width:27px;height:27px;border-right:1px solid #b8b8b6;border-bottom:1px solid #a9a9a7;border-left:1px solid #fff"></div>
<div class="a" style="left:1488px;top:25px;width:27px;height:27px;border-right:1px solid #b8b8b6;border-bottom:1px solid #a9a9a7;border-left:1px solid #fff"></div>
<div class="a" style="left:1137px;top:52px;width:380px;height:1px;background:#a9a9a7"></div>
<svg class="a" style="left:1149px;top:25px" width="27" height="27"><path d="M3.5 9.5H8L9 7L10 12L11 7L12 12L13 7L14 12L15 7L16 12L17 7L18 12L19 9.5H24" stroke="#555" stroke-width=".8" fill="none"/><path d="M15.5 6.5L11 16.5" stroke="#222" stroke-width="1.6"/><path d="M12.5 7L13.5 15" stroke="#444" stroke-width="1"/><circle cx="9.5" cy="18.5" r="2" fill="none" stroke="#5a64c0" stroke-width="1.1"/><circle cx="14" cy="20.5" r="2" fill="none" stroke="#5a64c0" stroke-width="1.1"/></svg>
<svg class="a" style="left:1176px;top:25px" width="27" height="27"><path d="M4.5 6.5H12L14 8.5V16.5H4.5Z" fill="#8c8c8c" stroke="#5a5a5a" stroke-width="1"/><path d="M10.5 10.5H17L19 12.5V20.5H10.5Z" fill="#b0b0b0" stroke="#5a64c0" stroke-width="1.1"/><path d="M12 16L13 14L14 17L15 13L16 16" stroke="#888" stroke-width=".6" fill="none"/></svg>
<svg class="a" style="left:1203px;top:25px" width="27" height="27"><rect x="5.5" y="7" width="13" height="11" rx="1" fill="#c2bc8a" stroke="#6a6a5a" stroke-width="1"/><path d="M9 7.5Q9 5 12 5Q15 5 15 7.5Z" fill="#d8d060" stroke="#6a6a5a" stroke-width=".7"/><path d="M11.5 12.5H18L20 14.5V22.5H11.5Z" fill="#b0b0b0" stroke="#5a64c0" stroke-width="1.1"/></svg>
<svg class="a" style="left:1230px;top:25px" width="27" height="27"><path d="M3 14.5H8M18.5 14.5H23" stroke="#5a64c0" stroke-width="1"/><path d="M8.5 7V20M17.5 7V20" stroke="#444" stroke-width="1.1"/><path d="M9 14.5H9.5V8.5H11.5V20.5H13.5V8.5H15.5V20.5H17V14.5" stroke="#5a64c0" stroke-width=".8" fill="none"/></svg>
<svg class="a" style="left:1257px;top:25px" width="27" height="27"><path d="M3.5 15V10H5.5V19.5H7.5V9H9V15" stroke="#5a64c0" stroke-width=".8" fill="none"/><path d="M9.5 7V20M16.5 7V20" stroke="#444" stroke-width="1.1"/><path d="M9.5 15H16.5" stroke="#5a64c0" stroke-width="1"/><path d="M17.5 15V20H19.5V9.5H21.5V19.5H23.5V15" stroke="#5a64c0" stroke-width=".8" fill="none"/></svg>
<svg class="a" style="left:1302px;top:30px" width="18" height="16"><path d="M4 5Q9 1 13 4Q17 8 13 12" stroke="#666" stroke-width="1.3" fill="none"/><path d="M1 4L6 2L5 8Z" fill="#666"/></svg>
<svg class="a" style="left:1329px;top:30px" width="18" height="16"><path d="M14 5Q9 1 5 4Q1 8 5 12" stroke="#666" stroke-width="1.3" fill="none"/><path d="M17 4L12 2L13 8Z" fill="#666"/></svg>
<svg class="a" style="left:1369px;top:27px" width="20" height="22"><rect x="7" y="1" width="6" height="2" fill="#111"/><rect x="9" y="2" width="2" height="4" fill="#111"/><circle cx="10" cy="12.5" r="7" fill="#fff" stroke="#111" stroke-width="1.8"/><path d="M7 9L10 13L14 10" stroke="#2030c0" stroke-width="1.3" fill="none"/></svg>
<svg class="a" style="left:1410px;top:28px" width="22" height="22"><path d="M9 12L2 19" stroke="#777" stroke-width="3"/><circle cx="13" cy="8" r="6" fill="#b0b0b0" stroke="#666" stroke-width="1.2"/><path d="M10 8H16M13 5V11" stroke="#222" stroke-width="2"/></svg>
<svg class="a" style="left:1437px;top:28px" width="22" height="22"><path d="M9 12L2 19" stroke="#777" stroke-width="3"/><circle cx="13" cy="8" r="6" fill="#b0b0b0" stroke="#666" stroke-width="1.2"/><path d="M10 8H16" stroke="#222" stroke-width="2"/></svg>
<svg class="a" style="left:1464px;top:28px" width="22" height="22"><path d="M9 12L2 19" stroke="#777" stroke-width="3"/><circle cx="13" cy="8" r="6" fill="#b0b0b0" stroke="#666" stroke-width="1.2"/><path d="M12 17H20M12 17L14 15M12 17L14 19M20 17L18 15M20 17L18 19" stroke="#444" stroke-width="1.1"/></svg>
<svg class="a" style="left:1491px;top:28px" width="22" height="22"><path d="M9 12L2 19" stroke="#777" stroke-width="3"/><circle cx="13" cy="8" r="6" fill="#b0b0b0" stroke="#666" stroke-width="1.2"/><path d="M12 18H21M12 15V21M21 15V21" stroke="#444" stroke-width="1.2"/></svg>
<div class="a" style="left:1515px;top:25px;width:10px;height:27px;background:#fdfdfc;border-right:1px solid #a9a9a7;border-left:1px solid #d8d8d6"></div>
<svg class="a" style="left:1519px;top:25px" width="4" height="27"><g fill="#9a9a98"><rect x="0" y="5" width="4" height="1"/><rect x="0" y="9" width="4" height="1"/><rect x="0" y="13" width="4" height="1"/><rect x="0" y="17" width="4" height="1"/><rect x="0" y="21" width="4" height="1"/></g></svg>
<div class="a" style="left:1526px;top:25px;width:28px;height:27px;border-right:1px solid #b8b8b6;border-bottom:1px solid #a9a9a7"></div>
<div class="a" style="left:1515px;top:52px;width:405px;height:1px;background:#a9a9a7"></div>
<svg class="a" style="left:1531px;top:29px" width="20" height="20"><path d="M2 1.5L18 10L2 18.5Z" fill="#70d070"/></svg>
<div class="a" style="left:1559px;top:43px;width:92px;height:1px;background:#a0a0a0"></div>
<div class="a" style="left:1561px;top:32px;width:5px;height:1px;background:#111"></div>
<svg class="a" style="left:1641px;top:29px" width="9" height="9"><path d="M4.5 1V8M1 4.5H8" stroke="#111" stroke-width="1.2"/></svg>
<svg class="a" style="left:1560px;top:39px" width="95" height="4"><g fill="#999"><rect x="0" y="0" width="1" height="3"/><rect x="9" y="0" width="1" height="2"/><rect x="18" y="0" width="1" height="2"/><rect x="27" y="0" width="1" height="2"/><rect x="36" y="0" width="1" height="2"/><rect x="45" y="0" width="1" height="2"/><rect x="54" y="0" width="1" height="2"/><rect x="63" y="0" width="1" height="2"/><rect x="72" y="0" width="1" height="2"/><rect x="81" y="0" width="1" height="2"/><rect x="90" y="0" width="1" height="3"/></g></svg>
<svg class="a" style="left:1582px;top:34px" width="12" height="15"><path d="M1 3Q1 1 3 1H9Q11 1 11 3V9L6 14L1 9Z" fill="#c8c8e8" stroke="#222" stroke-width="1"/><path d="M4 5H8M4 7H8" stroke="#777" stroke-width=".8"/></svg>
<div class="a" style="left:813px;top:53px;width:10px;height:27px;background:#fdfdfc;border-right:1px solid #a9a9a7;border-left:1px solid #d8d8d6"></div>
<svg class="a" style="left:817px;top:53px" width="4" height="27"><g fill="#9a9a98"><rect x="0" y="5" width="4" height="1"/><rect x="0" y="9" width="4" height="1"/><rect x="0" y="13" width="4" height="1"/><rect x="0" y="17" width="4" height="1"/><rect x="0" y="21" width="4" height="1"/></g></svg>
<div class="a" style="left:826px;top:55px;width:69px;height:23px;border:1px solid #c6c4bf;border-radius:4px;background:linear-gradient(#fdfdfc,#eeeeec)"></div>
<div class="a" style="left:826px;top:59px;width:46px;height:18px;overflow:hidden"><div class="t" style="left:8.00px;top:0;font-size:15px;color:#4c4c4c;letter-spacing:-1.000px">ALSA</div></div>
<div class="a" style="left:874px;top:59px;width:1px;height:15px;background:#d6d4d0"></div>
<svg class="a" style="left:880px;top:60px" width="8" height="13"><path d="M1 4.5L4 1.5L7 4.5Z M1 8.5L4 11.5L7 8.5Z" fill="#6a6a6a"/></svg>
<svg class="a" style="left:901px;top:60px" width="14" height="13"><path d="M1 4.5H3.5L7 1.5V11.5L3.5 8.5H1Z" fill="#111"/><path d="M9 4Q10.5 6.5 9 9M11 2.5Q13 6.5 11 10.5" stroke="#111" stroke-width="1.1" fill="none"/></svg>
<div class="a" style="left:922px;top:55px;width:166px;height:23px;border:1px solid #c6c4bf;border-radius:4px;background:linear-gradient(#fdfdfc,#eeeeec)"></div>
<div class="a" style="left:922px;top:59px;width:144px;height:18px;overflow:hidden"><div class="t" style="left:7.00px;top:0;font-size:15px;color:#4c4c4c;letter-spacing:0.767px">default</div></div>
<div class="a" style="left:1068px;top:59px;width:1px;height:15px;background:#d6d4d0"></div>
<svg class="a" style="left:1074px;top:60px" width="8" height="13"><path d="M1 4.5L4 1.5L7 4.5Z M1 8.5L4 11.5L7 8.5Z" fill="#6a6a6a"/></svg>
<svg class="a" style="left:1093px;top:57px" width="22" height="20"><path d="M1.5 19.5L4 16.5" stroke="#111" stroke-width="1"/><path d="M3.5 17L11 9.5" stroke="#111" stroke-width="2.2"/><path d="M4.5 16L10.5 10" stroke="#ddd" stroke-width=".6"/><path d="M10.5 9L12 3.5L15.5 1.5L19 3L20 6.5L17.5 10L12.5 11Z" fill="#c8c8c8" stroke="#111" stroke-width="1.2"/><path d="M13 4.5L17.5 9M15 3L19 7" stroke="#fff" stroke-width="1"/></svg>
<div class="a" style="left:1116px;top:55px;width:200px;height:23px;border:1px solid #c6c4bf;border-radius:4px;background:linear-gradient(#fdfdfc,#eeeeec)"></div>
<div class="a" style="left:1116px;top:59px;width:176px;height:18px;overflow:hidden"><div class="t" style="left:7.50px;top:0;font-size:15px;color:#4c4c4c;letter-spacing:-0.523px">C-Media CMI8738: PCI DAC</div></div>
<div class="a" style="left:1296px;top:59px;width:1px;height:15px;background:#d6d4d0"></div>
<svg class="a" style="left:1302px;top:60px" width="8" height="13"><path d="M1 4.5L4 1.5L7 4.5Z M1 8.5L4 11.5L7 8.5Z" fill="#6a6a6a"/></svg>
<div class="a" style="left:1319px;top:55px;width:107px;height:23px;border:1px solid #c6c4bf;border-radius:4px;background:linear-gradient(#fdfdfc,#eeeeec)"></div>
<div class="a" style="left:1319px;top:59px;width:83px;height:18px;overflow:hidden"><div class="t" style="left:7.50px;top:0;font-size:15px;color:#4c4c4c;letter-spacing:-0.167px">2 (Stereo) Canali</div></div>
<div class="a" style="left:1406px;top:59px;width:1px;height:15px;background:#d6d4d0"></div>
<svg class="a" style="left:1412px;top:60px" width="8" height="13"><path d="M1 4.5L4 1.5L7 4.5Z M1 8.5L4 11.5L7 8.5Z" fill="#6a6a6a"/></svg>
<div class="a" style="left:1430px;top:53px;width:1px;height:27px;background:#a9a9a7"></div>
<div class="a" style="left:1433px;top:53px;width:1px;height:27px;background:#a9a9a7"></div>
<div class="a" style="left:51px;top:107px;width:1869px;height:1px;background:#c4c4c4"></div>
<div class="a" style="left:51px;top:108px;width:1869px;height:1px;background:#000"></div>
<div class="a" style="left:51px;top:109px;width:1869px;height:1px;background:#b4b4b4"></div>
<div class="a" style="left:103px;top:102px;width:1px;height:4px;background:#111"></div>
<div class="a" style="left:146px;top:104px;width:1px;height:2px;background:#111"></div>
<div class="t" style="left:87.90px;top:89px;font-size:12px;font-weight:bold;letter-spacing:1.750px;color:#000;-webkit-text-stroke:.25px #000">- 1,0</div>
<div class="a" style="left:189px;top:102px;width:1px;height:4px;background:#111"></div>
<div class="a" style="left:232px;top:104px;width:1px;height:2px;background:#111"></div>
<div class="t" style="left:181.60px;top:89px;font-size:12px;font-weight:bold;letter-spacing:2.200px;color:#000;-webkit-text-stroke:.25px #000">0,0</div>
<div class="a" style="left:275px;top:102px;width:1px;height:4px;background:#111"></div>
<div class="a" style="left:318px;top:104px;width:1px;height:2px;background:#111"></div>
<div class="t" style="left:266.70px;top:89px;font-size:12px;font-weight:bold;letter-spacing:2.700px;color:#000;-webkit-text-stroke:.25px #000">1,0</div>
<div class="a" style="left:361px;top:102px;width:1px;height:4px;background:#111"></div>
<div class="a" style="left:404px;top:104px;width:1px;height:2px;background:#111"></div>
<div class="t" style="left:353.80px;top:89px;font-size:12px;font-weight:bold;letter-spacing:2.200px;color:#000;-webkit-text-stroke:.25px #000">2,0</div>
<div class="a" style="left:447px;top:102px;width:1px;height:4px;background:#111"></div>
<div class="a" style="left:490px;top:104px;width:1px;height:2px;background:#111"></div>
<div class="t" style="left:439.90px;top:89px;font-size:12px;font-weight:bold;letter-spacing:2.200px;color:#000;-webkit-text-stroke:.25px #000">3,0</div>
<div class="a" style="left:533px;top:102px;width:1px;height:4px;background:#111"></div>
<div class="a" style="left:576px;top:104px;width:1px;height:2px;background:#111"></div>
<div class="t" style="left:526.00px;top:89px;font-size:12px;font-weight:bold;letter-spacing:2.200px;color:#000;-webkit-text-stroke:.25px #000">4,0</div>
<div class="a" style="left:619px;top:102px;width:1px;height:4px;background:#111"></div>
<div class="a" style="left:662px;top:104px;width:1px;height:2px;background:#111"></div>
<div class="t" style="left:612.10px;top:89px;font-size:12px;font-weight:bold;letter-spacing:2.200px;color:#000;-webkit-text-stroke:.25px #000">5,0</div>
<div class="a" style="left:705px;top:102px;width:1px;height:4px;background:#111"></div>
<div class="a" style="left:748px;top:104px;width:1px;height:2px;background:#111"></div>
<div class="t" style="left:698.20px;top:89px;font-size:12px;font-weight:bold;letter-spacing:2.200px;color:#000;-webkit-text-stroke:.25px #000">6,0</div>
<div class="a" style="left:792px;top:102px;width:1px;height:4px;background:#111"></div>
<div class="a" style="left:835px;top:104px;width:1px;height:2px;background:#111"></div>
<div class="t" style="left:784.30px;top:89px;font-size:12px;font-weight:bold;letter-spacing:2.200px;color:#000;-webkit-text-stroke:.25px #000">7,0</div>
<div class="a" style="left:878px;top:102px;width:1px;height:4px;background:#111"></div>
<div class="a" style="left:921px;top:104px;width:1px;height:2px;background:#111"></div>
<div class="t" style="left:870.40px;top:89px;font-size:12px;font-weight:bold;letter-spacing:2.200px;color:#000;-webkit-text-stroke:.25px #000">8,0</div>
<div class="a" style="left:964px;top:102px;width:1px;height:4px;background:#111"></div>
<div class="a" style="left:1007px;top:104px;width:1px;height:2px;background:#111"></div>
<div class="t" style="left:956.50px;top:89px;font-size:12px;font-weight:bold;letter-spacing:2.200px;color:#000;-webkit-text-stroke:.25px #000">9,0</div>
<div class="a" style="left:1050px;top:102px;width:1px;height:4px;background:#111"></div>
<div class="a" style="left:1093px;top:104px;width:1px;height:2px;background:#111"></div>
<div class="t" style="left:1035.80px;top:89px;font-size:12px;font-weight:bold;letter-spacing:2.100px;color:#000;-webkit-text-stroke:.25px #000">10,0</div>
<div class="a" style="left:1136px;top:102px;width:1px;height:4px;background:#111"></div>
<div class="a" style="left:1179px;top:104px;width:1px;height:2px;background:#111"></div>
<div class="t" style="left:1121.90px;top:89px;font-size:12px;font-weight:bold;letter-spacing:2.433px;color:#000;-webkit-text-stroke:.25px #000">11,0</div>
<div class="a" style="left:1222px;top:102px;width:1px;height:4px;background:#111"></div>
<div class="a" style="left:1265px;top:104px;width:1px;height:2px;background:#111"></div>
<div class="t" style="left:1208.00px;top:89px;font-size:12px;font-weight:bold;letter-spacing:2.100px;color:#000;-webkit-text-stroke:.25px #000">12,0</div>
<div class="a" style="left:1308px;top:102px;width:1px;height:4px;background:#111"></div>
<div class="a" style="left:1351px;top:104px;width:1px;height:2px;background:#111"></div>
<div class="t" style="left:1294.10px;top:89px;font-size:12px;font-weight:bold;letter-spacing:2.100px;color:#000;-webkit-text-stroke:.25px #000">13,0</div>
<div class="a" style="left:1394px;top:102px;width:1px;height:4px;background:#111"></div>
<div class="a" style="left:1437px;top:104px;width:1px;height:2px;background:#111"></div>
<div class="t" style="left:1380.20px;top:89px;font-size:12px;font-weight:bold;letter-spacing:2.100px;color:#000;-webkit-text-stroke:.25px #000">14,0</div>
<div class="a" style="left:1480px;top:102px;width:1px;height:4px;background:#111"></div>
<div class="a" style="left:1523px;top:104px;width:1px;height:2px;background:#111"></div>
<div class="t" style="left:1466.30px;top:89px;font-size:12px;font-weight:bold;letter-spacing:2.100px;color:#000;-webkit-text-stroke:.25px #000">15,0</div>
<div class="a" style="left:1566px;top:102px;width:1px;height:4px;background:#111"></div>
<div class="a" style="left:1609px;top:104px;width:1px;height:2px;background:#111"></div>
<div class="t" style="left:1552.40px;top:89px;font-size:12px;font-weight:bold;letter-spacing:2.100px;color:#000;-webkit-text-stroke:.25px #000">16,0</div>
<div class="a" style="left:1652px;top:102px;width:1px;height:4px;background:#111"></div>
<div class="a" style="left:1696px;top:104px;width:1px;height:2px;background:#111"></div>
<div class="t" style="left:1638.50px;top:89px;font-size:12px;font-weight:bold;letter-spacing:2.100px;color:#000;-webkit-text-stroke:.25px #000">17,0</div>
<div class="a" style="left:1739px;top:102px;width:1px;height:4px;background:#111"></div>
<div class="a" style="left:1782px;top:104px;width:1px;height:2px;background:#111"></div>
<div class="t" style="left:1724.60px;top:89px;font-size:12px;font-weight:bold;letter-spacing:2.100px;color:#000;-webkit-text-stroke:.25px #000">18,0</div>
<div class="a" style="left:1825px;top:102px;width:1px;height:4px;background:#111"></div>
<div class="a" style="left:1868px;top:104px;width:1px;height:2px;background:#111"></div>
<div class="t" style="left:1810.70px;top:89px;font-size:12px;font-weight:bold;letter-spacing:2.100px;color:#000;-webkit-text-stroke:.25px #000">19,0</div>
<div class="a" style="left:1911px;top:102px;width:1px;height:4px;background:#111"></div>
<div class="t" style="left:1889.80px;top:89px;font-size:12px;font-weight:bold;letter-spacing:1.700px;color:#000;-webkit-text-stroke:.25px #000">20,0</div>
<div class="a" style="left:146px;top:104px;width:1px;height:2px;background:#111"></div>
<div class="a" style="left:60px;top:104px;width:1px;height:2px;background:#111"></div>
<div class="a" style="left:1918px;top:82px;width:1px;height:26px;background:#a9a9a7"></div>
<div class="a" style="left:188px;top:82px;width:1px;height:25px;background:#111"></div>
<svg class="a" style="left:189px;top:92px" width="9" height="16"><path d="M1 8L7.5 1.5V15Z" fill="#c4c4c4" stroke="#999" stroke-width=".6"/></svg>
<!--/TB-->
<div id="selbar" class="a"></div>
<div id="status" class="a"></div>
<!--SEL-->
<div class="a" style="left:51px;top:999px;width:11px;height:55px;background:#fdfdfc;border-right:1px solid #a9a9a7;border-left:1px solid #d8d8d6"></div>
<svg class="a" style="left:55px;top:999px" width="4" height="55"><g fill="#9a9a98"><rect x="0" y="5" width="4" height="1"/><rect x="0" y="9" width="4" height="1"/><rect x="0" y="13" width="4" height="1"/><rect x="0" y="17" width="4" height="1"/><rect x="0" y="21" width="4" height="1"/><rect x="0" y="25" width="4" height="1"/><rect x="0" y="29" width="4" height="1"/><rect x="0" y="33" width="4" height="1"/><rect x="0" y="37" width="4" height="1"/><rect x="0" y="41" width="4" height="1"/><rect x="0" y="45" width="4" height="1"/><rect x="0" y="49" width="4" height="1"/></g></svg>
<div class="a" style="left:51px;top:1054px;width:1869px;height:1px;background:#a9a9a7"></div>
<div class="a" style="left:51px;top:1055px;width:1869px;height:1px;background:#ffffff"></div>
<div class="t" style="left:62.50px;top:998px;font-size:13px;color:#4a4a4a;letter-spacing:0.012px;">Frequenza</div>
<div class="t" style="left:62.50px;top:1013px;font-size:13px;color:#4a4a4a;letter-spacing:0.469px;">progetto (Hz):</div>
<div class="a" style="left:64px;top:1029px;width:78px;height:26px;border:1px solid #c4c2be;border-bottom:none;border-radius:4px 4px 0 0;background:linear-gradient(#fdfdfc,#efefed)"></div>
<div class="a" style="left:65px;top:1030px;width:49px;height:24px;background:#fff;border-right:1px solid #b8b6b2;border-radius:3px 0 0 0"></div>
<div class="t" style="left:68.50px;top:1036px;font-size:14.5px;color:#333;letter-spacing:-0.375px;">44100</div>
<svg class="a" style="left:123px;top:1038px" width="10" height="8"><path d="M1 1H9L5 6.5Z" fill="#777"/></svg>
<div class="a" style="left:179px;top:1028px;width:1px;height:26px;background:#d6d6d4"></div>
<div class="a" style="left:189px;top:1035px;width:14px;height:14px;border:1px solid #a8a7a3;border-radius:2px;background:#fff"></div>
<div class="t" style="left:210.00px;top:1035px;font-size:13px;color:#4a4a4a;letter-spacing:0.211px;">Ancoraggio</div>
<div class="t" style="left:285.70px;top:1005px;font-size:13px;color:#4a4a4a;letter-spacing:0.038px;">Inizio selezione:</div>
<svg class="a" style="left:440px;top:1004px" width="16" height="16"><circle cx="8" cy="8" r="7" fill="#ee7446" stroke="#c4582c" stroke-width="1"/><circle cx="8" cy="8" r="3" fill="#6e3420"/></svg>
<div class="t" style="left:461.00px;top:1005px;font-size:13px;color:#4a4a4a;letter-spacing:0.100px;">Fine</div>
<div class="a" style="left:496px;top:1005px;width:14px;height:14px;border-radius:50%;background:#fff;border:1px solid #a8a7a3"></div>
<div class="t" style="left:516.50px;top:1005px;font-size:13px;color:#4a4a4a;letter-spacing:0.275px;">Lunghezza</div>
<div class="t" style="left:596.30px;top:1005px;font-size:13px;color:#4a4a4a;letter-spacing:0.013px;">Posizione audio:</div>
<div class="a" style="left:590px;top:1028px;width:1px;height:26px;background:#d6d6d4"></div>
<div class="a" style="left:286px;top:1031px;width:146px;height:22px;border:1px solid #c8c8c6;background:#fbfbfa"></div>
<div class="a" style="left:288px;top:1033px;width:142px;height:18px;background:#d6d6d6"></div>
<div class="a" style="left:422px;top:1033px;width:8px;height:18px;background:#e4e4e4;border-left:1px solid #fafafa;border-right:1px solid #b8b8b8"></div>
<svg class="a" style="left:422px;top:1039px" width="9" height="6"><path d="M0.5 0.5H8.5L4.5 5.5Z" fill="#111"/></svg>
<div class="t" style="left:290.8px;top:1036px;font-size:12.5px;color:#0000c8;-webkit-text-stroke:.25px #0000c8">0</div>
<div class="t" style="left:300.6px;top:1036px;font-size:12.5px;color:#0000c8;-webkit-text-stroke:.25px #0000c8">0</div>
<div class="t" style="left:312.3px;top:1037px;font-size:12px;color:#1a1a1a;-webkit-text-stroke:.15px #1a1a1a">h</div>
<div class="t" style="left:323.6px;top:1036px;font-size:12.5px;color:#0000c8;-webkit-text-stroke:.25px #0000c8">0</div>
<div class="t" style="left:333.4px;top:1036px;font-size:12.5px;color:#0000c8;-webkit-text-stroke:.25px #0000c8">0</div>
<div class="t" style="left:345.0px;top:1037px;font-size:12px;color:#1a1a1a;-webkit-text-stroke:.15px #1a1a1a">m</div>
<div class="t" style="left:359.7px;top:1036px;font-size:12.5px;color:#0000c8;-webkit-text-stroke:.25px #0000c8">0</div>
<div class="t" style="left:369.5px;top:1036px;font-size:12.5px;color:#0000c8;-webkit-text-stroke:.25px #0000c8">0</div>
<div class="t" style="left:378.9px;top:1036px;font-size:12.5px;color:#0000c8;-webkit-text-stroke:.25px #0000c8">.</div>
<div class="t" style="left:382.6px;top:1036px;font-size:12.5px;color:#0000c8;-webkit-text-stroke:.25px #0000c8">0</div>
<div class="t" style="left:392.5px;top:1036px;font-size:12.5px;color:#0000c8;-webkit-text-stroke:.25px #0000c8">0</div>
<div class="t" style="left:402.3px;top:1036px;font-size:12.5px;color:#0000c8;-webkit-text-stroke:.25px #0000c8">0</div>
<div class="t" style="left:413.5px;top:1037px;font-size:12px;color:#1a1a1a;-webkit-text-stroke:.15px #1a1a1a">s</div>
<div class="a" style="left:438px;top:1031px;width:146px;height:22px;border:1px solid #c8c8c6;background:#fbfbfa"></div>
<div class="a" style="left:440px;top:1033px;width:142px;height:18px;background:#d6d6d6"></div>
<div class="a" style="left:574px;top:1033px;width:8px;height:18px;background:#e4e4e4;border-left:1px solid #fafafa;border-right:1px solid #b8b8b8"></div>
<svg class="a" style="left:574px;top:1039px" width="9" height="6"><path d="M0.5 0.5H8.5L4.5 5.5Z" fill="#111"/></svg>
<div class="t" style="left:442.8px;top:1036px;font-size:12.5px;color:#0000c8;-webkit-text-stroke:.25px #0000c8">0</div>
<div class="t" style="left:452.6px;top:1036px;font-size:12.5px;color:#0000c8;-webkit-text-stroke:.25px #0000c8">0</div>
<div class="t" style="left:464.3px;top:1037px;font-size:12px;color:#1a1a1a;-webkit-text-stroke:.15px #1a1a1a">h</div>
<div class="t" style="left:475.6px;top:1036px;font-size:12.5px;color:#0000c8;-webkit-text-stroke:.25px #0000c8">0</div>
<div class="t" style="left:485.4px;top:1036px;font-size:12.5px;color:#0000c8;-webkit-text-stroke:.25px #0000c8">0</div>
<div class="t" style="left:497.0px;top:1037px;font-size:12px;color:#1a1a1a;-webkit-text-stroke:.15px #1a1a1a">m</div>
<div class="t" style="left:511.7px;top:1036px;font-size:12.5px;color:#0000c8;-webkit-text-stroke:.25px #0000c8">0</div>
<div class="t" style="left:521.5px;top:1036px;font-size:12.5px;color:#0000c8;-webkit-text-stroke:.25px #0000c8">0</div>
<div class="t" style="left:530.9px;top:1036px;font-size:12.5px;color:#0000c8;-webkit-text-stroke:.25px #0000c8">.</div>
<div class="t" style="left:534.6px;top:1036px;font-size:12.5px;color:#0000c8;-webkit-text-stroke:.25px #0000c8">0</div>
<div class="t" style="left:544.5px;top:1036px;font-size:12.5px;color:#0000c8;-webkit-text-stroke:.25px #0000c8">0</div>
<div class="t" style="left:554.3px;top:1036px;font-size:12.5px;color:#0000c8;-webkit-text-stroke:.25px #0000c8">0</div>
<div class="t" style="left:565.5px;top:1037px;font-size:12px;color:#1a1a1a;-webkit-text-stroke:.15px #1a1a1a">s</div>
<div class="a" style="left:597px;top:1031px;width:146px;height:22px;border:1px solid #c8c8c6;background:#fbfbfa"></div>
<div class="a" style="left:599px;top:1033px;width:142px;height:18px;background:#d6d6d6"></div>
<div class="a" style="left:733px;top:1033px;width:8px;height:18px;background:#e4e4e4;border-left:1px solid #fafafa;border-right:1px solid #b8b8b8"></div>
<svg class="a" style="left:733px;top:1039px" width="9" height="6"><path d="M0.5 0.5H8.5L4.5 5.5Z" fill="#111"/></svg>
<div class="t" style="left:601.8px;top:1036px;font-size:12.5px;color:#0000c8;-webkit-text-stroke:.25px #0000c8">0</div>
<div class="t" style="left:611.6px;top:1036px;font-size:12.5px;color:#0000c8;-webkit-text-stroke:.25px #0000c8">0</div>
<div class="t" style="left:623.3px;top:1037px;font-size:12px;color:#1a1a1a;-webkit-text-stroke:.15px #1a1a1a">h</div>
<div class="t" style="left:634.6px;top:1036px;font-size:12.5px;color:#0000c8;-webkit-text-stroke:.25px #0000c8">0</div>
<div class="t" style="left:644.4px;top:1036px;font-size:12.5px;color:#0000c8;-webkit-text-stroke:.25px #0000c8">0</div>
<div class="t" style="left:656.0px;top:1037px;font-size:12px;color:#1a1a1a;-webkit-text-stroke:.15px #1a1a1a">m</div>
<div class="t" style="left:670.7px;top:1036px;font-size:12.5px;color:#0000c8;-webkit-text-stroke:.25px #0000c8">0</div>
<div class="t" style="left:680.5px;top:1036px;font-size:12.5px;color:#0000c8;-webkit-text-stroke:.25px #0000c8">0</div>
<div class="t" style="left:689.9px;top:1036px;font-size:12.5px;color:#0000c8;-webkit-text-stroke:.25px #0000c8">.</div>
<div class="t" style="left:693.6px;top:1036px;font-size:12.5px;color:#0000c8;-webkit-text-stroke:.25px #0000c8">0</div>
<div class="t" style="left:703.5px;top:1036px;font-size:12.5px;color:#0000c8;-webkit-text-stroke:.25px #0000c8">0</div>
<div class="t" style="left:713.3px;top:1036px;font-size:12.5px;color:#0000c8;-webkit-text-stroke:.25px #0000c8">0</div>
<div class="t" style="left:724.5px;top:1037px;font-size:12px;color:#1a1a1a;-webkit-text-stroke:.15px #1a1a1a">s</div>
<div class="a" style="left:53px;top:1057px;width:1244px;height:23px;background:#f0efed;border-left:1px solid #a9a9a7;border-top:1px solid #a9a9a7;border-right:1px solid #fff"></div>
<div class="a" style="left:1299px;top:1057px;width:619px;height:23px;background:#f0efed;border-left:1px solid #a9a9a7;border-top:1px solid #a9a9a7;border-right:1px solid #fff"></div>
<svg class="a" style="left:1906px;top:1068px" width="12" height="12"><g fill="#b8b8b6"><rect x="9" y="3" width="1.2" height="1.2"/><rect x="6" y="6" width="1.2" height="1.2"/><rect x="9" y="6" width="1.2" height="1.2"/><rect x="3" y="9" width="1.2" height="1.2"/><rect x="6" y="9" width="1.2" height="1.2"/><rect x="9" y="9" width="1.2" height="1.2"/></g></svg>
<!--/SEL-->

<!--DLG-->
<div id="dlg" class="a">
<div id="dtitle" class="a"></div>
<svg class="a" style="left:7px;top:6px" width="17" height="17"><circle cx="8.5" cy="8.5" r="7.8" fill="#3a302a" opacity=".55"/><circle cx="8.5" cy="8.5" r="7.1" fill="url(#gCl)"/><path d="M5.6 5.6L11.4 11.4M11.4 5.6L5.6 11.4" stroke="#2e1c14" stroke-width="1.1"/></svg>
<svg class="a" style="left:26px;top:6px" width="17" height="17"><circle cx="8.5" cy="8.5" r="7.8" fill="#2a2926" opacity=".6"/><circle cx="8.5" cy="8.5" r="7.1" fill="url(#gMx)"/><rect x="5.5" y="5.5" width="6" height="6" fill="#4e4c48" stroke="#2c2b28" stroke-width="1.1"/></svg>
<div class="t" style="left:54.00px;top:7px;font-size:15px;font-weight:bold;color:#e2ded6;letter-spacing:0.000px;">Preferenze:Registrazione</div>
<div class="a" style="left:0px;top:28px;width:188px;height:361px;background:#fff;border-right:1px solid #b5b3ae;border-bottom:1px solid #b5b3ae"></div>
<div class="t" style="left:34.50px;top:35px;font-size:15px;color:#3c3c3c;letter-spacing:0.500px;">Dispositivi</div>
<div class="t" style="left:34.50px;top:56px;font-size:15px;color:#3c3c3c;letter-spacing:0.209px;">Riproduzione</div>
<div class="a" style="left:31px;top:74px;width:100px;height:21px;background:#f07746;outline:1px dotted #f8b898;outline-offset:-1px"></div>
<div class="t" style="left:34.50px;top:77px;font-size:15px;color:#ffffff;letter-spacing:0.067px;">Registrazione</div>
<div class="t" style="left:34.50px;top:98px;font-size:15px;color:#3c3c3c;letter-spacing:0.283px;">Qualità</div>
<div class="t" style="left:34.50px;top:119px;font-size:15px;color:#3c3c3c;letter-spacing:0.250px;">Interfaccia</div>
<div class="t" style="left:35.50px;top:140px;font-size:15px;color:#3c3c3c;letter-spacing:-0.640px;">Tracce</div>
<div class="t" style="left:34.50px;top:161px;font-size:15px;color:#3c3c3c;letter-spacing:0.281px;">Importa / Esporta</div>
<div class="t" style="left:34.50px;top:182px;font-size:15px;color:#3c3c3c;letter-spacing:0.144px;">Importazione estesa</div>
<div class="t" style="left:34.50px;top:203px;font-size:15px;color:#3c3c3c;letter-spacing:0.743px;">Progetti</div>
<div class="t" style="left:34.50px;top:224px;font-size:15px;color:#3c3c3c;letter-spacing:0.575px;">Spettrogrammi</div>
<div class="t" style="left:34.50px;top:245px;font-size:15px;color:#3c3c3c;letter-spacing:0.329px;">Cartelle</div>
<div class="t" style="left:35.50px;top:266px;font-size:15px;color:#3c3c3c;letter-spacing:0.436px;">Avvertimenti</div>
<div class="t" style="left:34.50px;top:287px;font-size:15px;color:#3c3c3c;letter-spacing:0.967px;">Effetti</div>
<div class="t" style="left:35.50px;top:308px;font-size:15px;color:#3c3c3c;letter-spacing:0.129px;">Tastiera</div>
<div class="t" style="left:34.50px;top:329px;font-size:15px;color:#3c3c3c;letter-spacing:0.025px;">Mouse</div>
<div class="a" style="left:195px;top:39px;width:601px;height:89px;border:1px solid #d3d1cc;border-radius:4px;box-shadow:inset 1px 1px 0 #fbfbfa,0 1px 0 #fbfbfa"></div>
<div class="t" style="left:199.50px;top:31px;font-size:15px;color:#4a4a4a;letter-spacing:0.150px;background:#f2f1f0;padding-right:2px">Playthrough</div>
<div class="a" style="left:205px;top:54px;width:14px;height:14px;border:1px solid #b04a20;border-radius:2px;background:linear-gradient(#f3844e,#df6230)"></div>
<svg class="a" style="left:206px;top:52px" width="16" height="16"><path d="M2.5 8.5L6 12.2L14.5 2.5" fill="none" stroke="#5e2f1c" stroke-width="2.4"/></svg>
<div class="t" style="left:225.00px;top:53px;font-size:15px;color:#3c3c3c;letter-spacing:0.031px;">Sovraregistra: Riproduci altre tracce mentre ne registri una nuova</div>
<div class="a" style="left:205px;top:82px;width:14px;height:14px;border:1px solid #a8a7a3;border-radius:2px;background:linear-gradient(#fff,#f4f4f4)"></div>
<div class="t" style="left:225.50px;top:81px;font-size:15px;color:#3c3c3c;letter-spacing:0.079px;width:562px;height:20px;overflow:hidden">Software Playthrough: Riproduci mentre registri o esegui monitoraggio nuova traccia</div>
<div class="t" style="left:216.50px;top:105px;font-size:15px;color:#3c3c3c;letter-spacing:0.325px;">(disabilita mentre registri "stereo mix")</div>
<div class="a" style="left:195px;top:143px;width:601px;height:72px;border:1px solid #d3d1cc;border-radius:4px;box-shadow:inset 1px 1px 0 #fbfbfa,0 1px 0 #fbfbfa"></div>
<div class="t" style="left:199.80px;top:134px;font-size:15px;color:#4a4a4a;letter-spacing:-0.100px;background:#f2f1f0;padding-right:2px">Latenza</div>
<div class="t" style="left:220.00px;top:158px;font-size:15px;color:#3c3c3c;letter-spacing:0.212px;">Audio nel buffer:</div>
<div class="a" style="left:338px;top:153px;width:43px;height:25px;background:#fff;border:1px solid #aeada9;border-radius:3px"></div>
<div class="t" style="left:342.00px;top:158px;font-size:15px;color:#333;letter-spacing:-1.000px;">100</div>
<div class="t" style="left:385.00px;top:158px;font-size:15px;color:#3c3c3c;letter-spacing:0.086px;">millisecondi (più alto = più latenza)</div>
<div class="t" style="left:201.20px;top:189px;font-size:15px;color:#3c3c3c;letter-spacing:0.044px;">Correzione latenza:</div>
<div class="a" style="left:338px;top:184px;width:43px;height:25px;background:#fff;border:1px solid #aeada9;border-radius:3px"></div>
<div class="t" style="left:341.00px;top:189px;font-size:15px;color:#333;letter-spacing:-0.333px;">-130</div>
<div class="t" style="left:385.00px;top:189px;font-size:15px;color:#3c3c3c;letter-spacing:0.235px;">millisecondi (negativo = all'indietro)</div>
<div class="a" style="left:195px;top:231px;width:601px;height:89px;border:1px solid #d3d1cc;border-radius:4px;box-shadow:inset 1px 1px 0 #fbfbfa,0 1px 0 #fbfbfa"></div>
<div class="t" style="left:199.50px;top:222px;font-size:15px;color:#4a4a4a;letter-spacing:0.083px;background:#f2f1f0;padding-right:2px">Registrazione attivata da audio</div>
<div class="a" style="left:205px;top:245px;width:14px;height:14px;border:1px solid #a8a7a3;border-radius:2px;background:linear-gradient(#fff,#f4f4f4)"></div>
<div class="t" style="left:225.00px;top:244px;font-size:15px;color:#3c3c3c;letter-spacing:0.100px;">Registrazione attivata da audio</div>
<div class="t" style="left:201.00px;top:283px;font-size:15px;color:#3c3c3c;letter-spacing:0.100px;">Livello attivazione audio (dB):</div>
<div class="t" style="left:465.00px;top:270px;font-size:14px;color:#3c3c3c;letter-spacing:0.400px;">-50</div>
<div class="a" style="left:408px;top:298px;width:380px;height:5px;border-radius:3px;background:#dcdad6;box-shadow:inset 0 1px 1px rgba(0,0,0,.15)"></div>
<div class="a" style="left:408px;top:298px;width:68px;height:5px;border-radius:3px;background:linear-gradient(#f28a5e,#e4683a);box-shadow:0 0 0 .5px #d65a2a"></div>
<svg class="a" style="left:468px;top:290px" width="14" height="22"><defs><linearGradient id="gTh" x1="0" y1="0" x2="0" y2="1"><stop offset="0" stop-color="#fdfdfc"/><stop offset=".6" stop-color="#f2f1ef"/><stop offset="1" stop-color="#d8d6d2"/></linearGradient></defs><path d="M1.5 7A5.5 5.5 0 0 1 12.5 7V14.5L7 20L1.5 14.5Z" fill="url(#gTh)" stroke="#a3a19c" stroke-width="1"/><path d="M4.8 8.5H9.2M4.8 10.8H9.2M4.8 13.1H9.2" stroke="#a8a6a2" stroke-width="0.9"/></svg>
<div class="a" style="left:614px;top:397px;width:83px;height:27px;border:1px solid #b2b0ac;border-radius:3px;background:linear-gradient(#fff,#ecebe9)"></div>
<div class="t" style="left:630.30px;top:403px;font-size:15px;color:#3c3c3c;letter-spacing:-0.217px;">Annulla</div>
<div class="a" style="left:708px;top:397px;width:83px;height:27px;border:1px solid #c0714f;border-radius:3px;background:linear-gradient(#fdae8c,#f39169)"></div>
<div class="t" style="left:738.80px;top:403px;font-size:15px;color:#3c3c3c;letter-spacing:-1.600px;">OK</div>
</div>
<!--/DLG-->
</body></html>
